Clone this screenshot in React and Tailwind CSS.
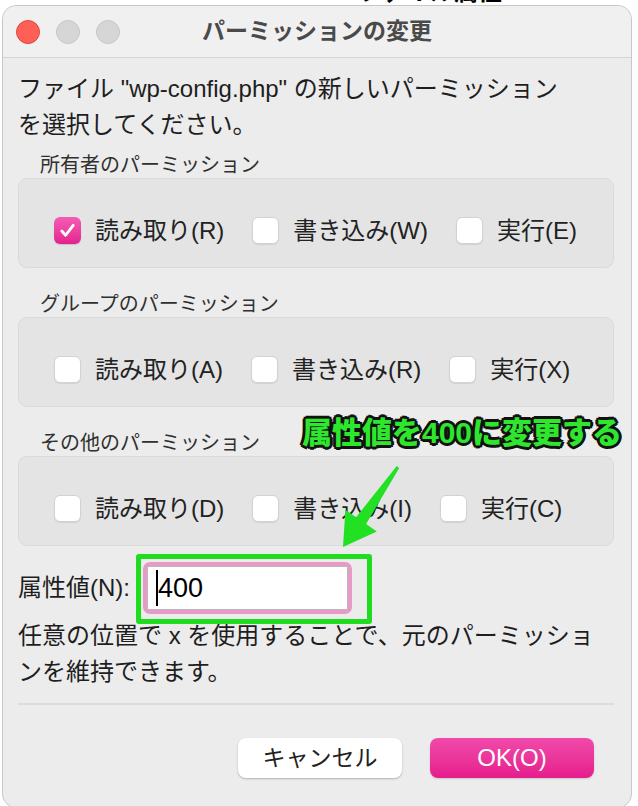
import React from "react";

const Checkbox = ({ checked }) =>
  checked ? (
    <span className="flex h-[27px] w-[27px] shrink-0 items-center justify-center rounded-[6px] bg-gradient-to-b from-[#f35cb6] to-[#e3208d] shadow-[0_1px_1px_rgba(0,0,0,0.15)]">
      <svg width="19" height="19" viewBox="0 0 20 20" fill="none">
        <path d="M4 10.5l4 4.5L16 4.5" stroke="white" strokeWidth="3" strokeLinecap="round" strokeLinejoin="round" />
      </svg>
    </span>
  ) : (
    <span className="h-[27px] w-[27px] shrink-0 rounded-[6px] border border-[#d2d2d2] bg-white shadow-[0_1px_1px_rgba(0,0,0,0.08)]" />
  );

const PermGroup = ({ title, items, first }) => (
  <div>
    <div className={`${first ? "mt-[10px]" : "mt-[24px]"} pl-[22px] text-[20px] leading-[24px] text-[#303030]`}>{title}</div>
    <div className="mt-[1px] h-[90px] rounded-[9px] border border-[#dadada] bg-[#e4e4e4] pl-[35px] pt-[38px]">
      <div className="flex items-center gap-[28px]">
        {items.map((it) => (
          <div key={it.label} className="flex items-center gap-[14px]">
            <Checkbox checked={it.checked} />
            <span className="text-[24px] leading-[27px] text-[#222]">{it.label}</span>
          </div>
        ))}
      </div>
    </div>
  </div>
);

export default function App() {
  return (
    <div className="relative h-[806px] w-[638px] overflow-hidden bg-white font-['Liberation_Sans','Noto_Sans_CJK_JP',sans-serif]">
      {/* text of the page behind the dialog */}
      <div className="absolute left-[358px] top-[-20px] text-[24px] font-bold leading-[24px] text-black">ファイル属性</div>

      <div className="relative ml-[2px] mt-[5px] h-[803px] w-[630px] rounded-[14px] border border-[#c8c8c8] bg-[#ececec]">
        {/* title bar */}
        <div className="grid h-[52px] grid-cols-[1fr_auto_1fr] items-center rounded-t-[14px] border-b border-[#d4d4d4] bg-[#f0f0f0] px-[13px]">
          <div className="flex gap-[16px]">
            <span className="h-[24px] w-[24px] rounded-full border border-[#e2463f] bg-[#fe5f57]" />
            <span className="h-[24px] w-[24px] rounded-full border border-[#c6c6c6] bg-[#d6d6d6]" />
            <span className="h-[24px] w-[24px] rounded-full border border-[#c6c6c6] bg-[#d6d6d6]" />
          </div>
          <div className="text-[23px] font-bold text-[#4a4a4a]">パーミッションの変更</div>
          <div />
        </div>

        {/* body */}
        <div className="pl-[15px] pr-[17px] pt-[13px]">
          <p className="text-[24px] leading-[36px] text-[#1e1e1e]">
            ファイル "wp-config.php" の新しいパーミッション
            <br />
            を選択してください。
          </p>

          <PermGroup
            first
            title="所有者のパーミッション"
            items={[
              { label: "読み取り(R)", checked: true },
              { label: "書き込み(W)" },
              { label: "実行(E)" },
            ]}
          />
          <PermGroup
            title="グループのパーミッション"
            items={[{ label: "読み取り(A)" }, { label: "書き込み(R)" }, { label: "実行(X)" }]}
          />
          <PermGroup
            title="その他のパーミッション"
            items={[{ label: "読み取り(D)" }, { label: "書き込み(I)" }, { label: "実行(C)" }]}
          />

          {/* value row */}
          <div className="mt-[16px] flex h-[52px] items-center gap-[13px]">
            <span className="text-[24px] text-[#1e1e1e]">属性値(N):</span>
            <div className="relative">
              <div className="h-[52px] w-[209px] rounded-[7px] bg-[#e89ac6] p-[4px]">
                <div className="flex h-full items-center border border-[#b9b9b9] bg-white pl-[8px]">
                  <span className="h-[36px] w-[2px] bg-black" />
                  <span className="text-[27px] leading-none text-black">400</span>
                </div>
              </div>
              <div className="absolute left-[-7px] top-[-8px] h-[70px] w-[236px] rounded-[3px] border-[5px] border-[#1fdc1f]" />
            </div>
          </div>

          <p className="mt-[4px] text-[24px] leading-[36px] text-[#1e1e1e]">
            任意の位置で x を使用することで、元のパーミッショ
            <br />
            ンを維持できます。
          </p>

          <div className="mt-[13px] h-[2px] bg-[#dcdcdc]" />

          <div className="mt-[33px] flex justify-end gap-[28px] pr-[20px]">
            <button className="h-[40px] w-[164px] rounded-[8px] bg-white text-[23px] text-[#222] shadow-[0_1px_2px_rgba(0,0,0,0.25)]">
              キャンセル
            </button>
            <button className="h-[40px] w-[164px] rounded-[8px] bg-gradient-to-b from-[#f049ab] to-[#e61b8b] text-[24px] text-white shadow-[0_1px_2px_rgba(0,0,0,0.15)]">
              OK(O)
            </button>
          </div>
        </div>

        {/* annotation */}
        <div className="absolute left-[299px] top-[410px] text-[30px] font-black leading-[34px] text-[#2ee62e] [text-shadow:2px_0_0_#111,-2px_0_0_#111,0_2px_0_#111,0_-2px_0_#111,2px_2px_0_#111,-2px_-2px_0_#111,2px_-2px_0_#111,-2px_2px_0_#111,3px_0_0_#111,-3px_0_0_#111,0_3px_0_#111,0_-3px_0_#111]">
          属性値を400に変更する
        </div>
        <svg className="absolute left-[327px] top-[454px]" width="80" height="95" viewBox="0 0 80 95">
          <polygon
            points="69.2,7.9 36.1,64 46.8,71.4 13,87 15.4,49.8 26.1,57.2 66.8,6.1"
            fill="#22e022"
          />
        </svg>
      </div>
    </div>
  );
}
